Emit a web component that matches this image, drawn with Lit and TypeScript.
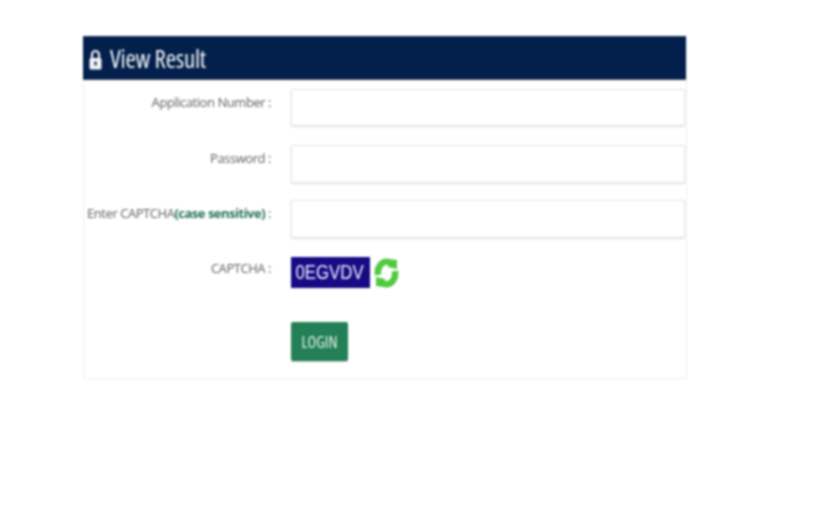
import { LitElement, html, css } from "lit";
import { customElement } from "lit/decorators.js";

@customElement("app-root")
export class AppRoot extends LitElement {
  static styles = css`
    :host {
      display: block;
      width: 828px;
      height: 507px;
      background: #fff;
      font-family: "Open Sans", "Noto Sans", sans-serif;
      overflow: hidden;
    }
    .wrap {
      padding: 36px 0 0 83px;
      filter: blur(0.9px);
    }
    .panel {
      width: 604px;
      box-sizing: border-box;
      height: 343px;
      border: 1px solid #f0f0f0;
      border-top: 0;
    }
    .head {
      margin: 0 0 0 -1px;
      height: 44px;
      background: #03204c;
      border-bottom: 1px solid #3a4658;
      border-top: 1px solid #25395c;
      box-sizing: border-box;
      display: flex;
      align-items: center;
      gap: 8px;
      padding-left: 6px;
      color: #f2f4f7;
      font-size: 25px;
      font-stretch: 75%;
      letter-spacing: -0.25px;
    }
    .head svg { display: block; margin-top: 2px; }
    .form {
      display: grid;
      grid-template-columns: 187px 394px;
      column-gap: 20px;
      padding-top: 9px;
    }
    .label {
      text-align: right;
      font-size: 13px;
      letter-spacing: -0.45px;
      line-height: 18px;
      color: #5f6266;
      white-space: nowrap;
      padding-top: 4px;
    }
    .label b { color: #28705a; font-weight: 700; letter-spacing: -0.5px; }
    .input {
      display: block;
      height: 37px;
      box-sizing: border-box;
      border: 1px solid #e4e4e4;
      border-radius: 2px;
      background: #fff;
      box-shadow: 0 1px 2px rgba(0, 0, 0, 0.12);
      margin-bottom: 19px;
    }
    .input.tall { height: 38px; margin-bottom: 17px; }
    .cap-row {
      display: flex;
      align-items: flex-start;
      gap: 3px;
      height: 67px;
      padding-top: 2px;
      box-sizing: border-box;
    }
    .cap {
      width: 79px;
      height: 31px;
      background: #170a85;
      color: #eef0fa;
      font-family: "Liberation Sans", Arial, sans-serif;
      font-size: 19.5px;
      line-height: 31px;
      display: flex;
      justify-content: center;
      padding-right: 1px;
      box-sizing: border-box;
    }
    .cap span { display: block; transform: scaleX(0.86); }
    .btn {
      display: block;
      width: 57px;
      height: 39px;
      border: 0;
      padding: 0;
      border-radius: 2px;
      background: #238056;
      color: #e8f3ee;
      font-family: inherit;
      font-size: 16px;
      font-stretch: 75%;
      box-shadow: 0 1px 1px rgba(0, 0, 0, 0.2);
    }
  `;

  render() {
    return html`
      <div class="wrap">
        <div class="panel">
          <div class="head">
            <svg width="13" height="21" viewBox="0 0 13 21">
              <path d="M3 10V5.5a3.5 3.5 0 0 1 7 0V10" fill="none" stroke="#f2f4f7" stroke-width="2.2" />
              <rect x="0.5" y="9" width="12" height="11.5" rx="1.5" fill="#f2f4f7" />
              <rect x="5.4" y="12.5" width="2.2" height="4" rx="1" fill="#03204c" />
            </svg>
            <span>View Result</span>
          </div>
          <div class="form">
            <div class="label">Application Number :</div>
            <div class="input"></div>
            <div class="label">Password :</div>
            <div class="input tall"></div>
            <div class="label">Enter CAPTCHA<b>(case sensitive)</b> :</div>
            <div class="input tall"></div>
            <div class="label">CAPTCHA :</div>
            <div class="cap-row">
              <div class="cap"><span>0EGVDV</span></div>
              <svg width="27" height="32" viewBox="0 0 27 32">
                <path d="M5 18A8.5 11.5 0 0 1 19 7.5" fill="none" stroke="#50c93f" stroke-width="6.5" />
                <path d="M16 2l8 1v9l-9-2z" fill="#50c93f" />
                <path d="M22 14A8.5 11.5 0 0 1 8 24.5" fill="none" stroke="#50c93f" stroke-width="6.5" />
                <path d="M11 30l-8-1v-9l9 2z" fill="#50c93f" />
              </svg>
            </div>
            <div></div>
            <button class="btn">LOGIN</button>
          </div>
        </div>
      </div>
    `;
  }
}
